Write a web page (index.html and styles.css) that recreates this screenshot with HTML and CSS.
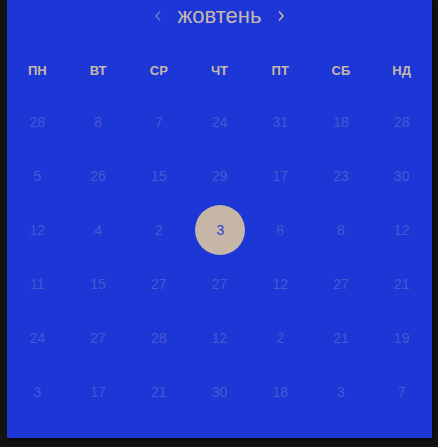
FILE: index.html
```html
<!DOCTYPE html>
<html lang="uk">
<head>
<meta charset="utf-8">
<link rel="stylesheet" href="styles.css">
</head>
<body>
<div class="panel">
  <div class="header">
    <span class="nav nav-prev"><svg width="8" height="12" viewBox="0 0 8 12"><path d="M6 1.5 L2 6 L6 10.5" fill="none" stroke="currentColor" stroke-width="1.5"/></svg></span>
    <span class="title">жовтень</span>
    <span class="nav nav-next"><svg width="8" height="12" viewBox="0 0 8 12"><path d="M2 1.5 L6 6 L2 10.5" fill="none" stroke="currentColor" stroke-width="1.5"/></svg></span>
  </div>
  <div class="weekdays">
    <span>ПН</span><span>ВТ</span><span>СР</span><span>ЧТ</span><span>ПТ</span><span>СБ</span><span>НД</span>
  </div>
  <div class="days">
    <span>28</span><span>8</span><span>7</span><span>24</span><span>31</span><span>18</span><span>28</span>
    <span>5</span><span>26</span><span>15</span><span>29</span><span>17</span><span>23</span><span>30</span>
    <span>12</span><span>4</span><span>2</span><span class="selected"><b>3</b></span><span>8</span><span>8</span><span>12</span>
    <span>11</span><span>15</span><span>27</span><span>27</span><span>12</span><span>27</span><span>21</span>
    <span>24</span><span>27</span><span>28</span><span>12</span><span>2</span><span>21</span><span>19</span>
    <span>3</span><span>17</span><span>21</span><span>30</span><span>18</span><span>3</span><span>7</span>
  </div>
</div>
</body>
</html>
```

FILE: styles.css
```css
html, body {
  margin: 0;
  padding: 0;
  background: #131312;
  height: 100%;
}
body {
  font-family: "Liberation Sans", Arial, sans-serif;
}
.panel {
  margin-left: 7px;
  width: 425px;
  height: 438px;
  background: #1c37d6;
  box-shadow: 2px 2px 4px rgba(0,0,0,0.6);
}
.header {
  height: 32px;
  display: flex;
  align-items: center;
  justify-content: center;
  gap: 16px;
  color: #c6b8aa;
}
.title {
  font-size: 22px;
  font-weight: 400;
}
.nav {
  display: flex;
  align-items: center;
}
.nav-prev { color: #6b79d6; }
.nav-next { color: #c6b8aa; }
.weekdays {
  margin-top: 13px;
  height: 50px;
  display: grid;
  grid-template-columns: repeat(7, 1fr);
  align-items: center;
  justify-items: center;
  color: #c6b8aa;
  font-size: 13px;
  font-weight: 700;
}
.days {
  display: grid;
  grid-template-columns: repeat(7, 1fr);
  grid-auto-rows: 54px;
  align-items: center;
  justify-items: center;
  font-size: 14px;
  color: #4757d3;
}
.days span {
  display: flex;
  align-items: center;
  justify-content: center;
}
.selected {
  width: 50px;
  height: 50px;
  border-radius: 50%;
  background: #c5b6a8;
  color: #2a3ed4;
  margin-left: 2px;
}
.selected b { font-weight: 400; }
```
